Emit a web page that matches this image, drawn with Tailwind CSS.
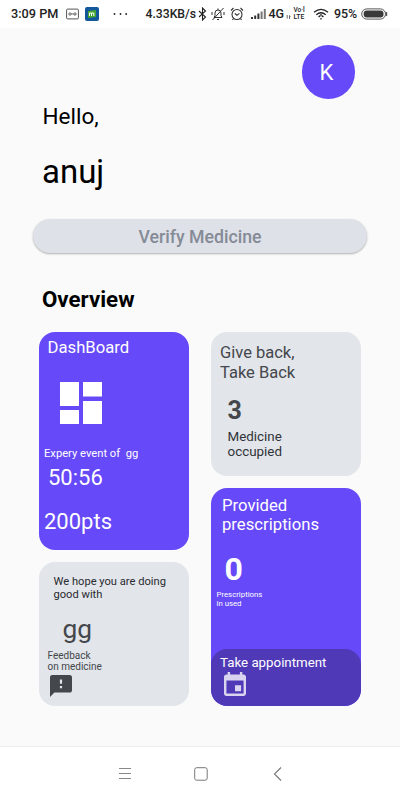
<!DOCTYPE html>
<html lang="en">
<head>
<meta charset="utf-8">
<meta name="viewport" content="width=device-width">
<title>Medicine overview</title>
<script src="https://cdn.jsdelivr.net/npm/@tailwindcss/browser@4"></script>
</head>
<body class="w-[400px] h-[800px] overflow-hidden bg-[#fafafa] flex flex-col font-[Roboto,sans-serif] text-black">
<header class="h-7 shrink-0 bg-white flex items-center pl-[11px] text-[12px] leading-[14px] font-medium text-[#222]">
  <span class="w-[55px] whitespace-nowrap text-[12.700px]">3:09 PM</span>
  <svg class="w-[13px] h-3 shrink-0" viewBox="0 0 13 12" fill="none" stroke="#555"><rect x=".6" y="1.1" width="11.8" height="9.8" rx="1"/><path d="M3 5h2v2H3zM5 6h3M8 5h2v2H8z" stroke-width=".8"/></svg>
  <svg class="w-3.5 h-3.5 ml-1.5 shrink-0" viewBox="0 0 14 14"><rect width="14" height="14" rx="2" fill="#12589b"/><path d="M3 4l8-1v7l-8 1z" fill="#45a52c"/><path d="M4.500 9V6h2v3M6.500 6h2.300v3" fill="none" stroke="#fff"/></svg>
  <svg class="w-[15px] h-3 ml-[14px] shrink-0" viewBox="0 0 15 12" fill="#222"><circle cx="1.500" cy="6" r=".9"/><circle cx="7.500" cy="6" r=".9"/><circle cx="13.200" cy="6" r=".9"/></svg>
  <span class="ml-[17.500px] w-[52.500px] whitespace-nowrap text-[12.200px]">4.33KB/s</span>
  <svg class="w-[9px] h-3.5 shrink-0" viewBox="0 0 9 14" fill="none" stroke="#222" stroke-width="1.1"><path d="M1 4l6.500 6L4.500 13V1l3 3L1 10"/></svg>
  <svg class="w-[14px] h-3.5 ml-1 shrink-0" viewBox="0 0 14 14" fill="none" stroke="#333" stroke-width="1"><path d="M3 10.500h8L10 8.500V6a3 3 0 0 0-6 0v2.500zM6 12.500h2M12.500 1L1.500 13M1 5v3M13 5v3M7 3V1.500"/></svg>
  <svg class="w-[14px] h-3.5 ml-[5px] shrink-0" viewBox="0 0 14 14" fill="none" stroke="#333" stroke-width="1.1"><circle cx="7" cy="7.500" r="5"/><path d="M4.800 6.500L7 8.300l2.400-2M1 3.500L3.500 1M13 3.500L10.500 1M3.500 11.500L2.500 13M10.500 11.500l1 1.500"/></svg>
  <svg class="w-[15px] h-3 ml-[6.500px] shrink-0" viewBox="0 0 15 12"><path d="M0 9h2v2H0zM3.200 7.500h2V11h-2zM6.400 5.500h2V11h-2z" fill="#333"/><path d="M9.600 3.500h2V11h-2zM12.800 1h2v10h-2z" fill="#777"/></svg>
  <span class="ml-[3px] w-[17px] whitespace-nowrap text-[12.500px]">4G</span>
  <svg class="w-[5px] h-3 shrink-0" viewBox="0 0 5 12" fill="none" stroke="#555" stroke-width=".9"><path d="M1.200 7v3.500M3.500 11V7.500l1 1"/></svg>
  <span class="ml-[3px] w-[13px] flex flex-col text-[7px] leading-[7px] font-medium"><span class="whitespace-nowrap text-[6.500px]">Vo·l</span><span class="whitespace-nowrap text-[6.800px]">LTE</span></span>
  <svg class="w-4 h-3 ml-[6px] shrink-0" viewBox="0 0 16 12" fill="none" stroke="#222" stroke-width="1.300"><path d="M1 4.200Q8-1.600 15 4.200M3.300 6.700Q8 2.800 12.700 6.700M5.600 9Q6.500 8 7 8M10.400 9Q9.500 8 9 8M8 6v2.500M8 10v1.500"/></svg>
  <span class="ml-[5.500px] w-[26.500px] whitespace-nowrap text-[12.400px]">95%</span>
  <svg class="w-[27px] h-3 shrink-0" viewBox="0 0 27 12"><rect x=".7" y=".9" width="23.800" height="10.200" rx="5.100" fill="none" stroke="#555"/><rect x="2.700" y="2.500" width="19.800" height="7" rx="3" fill="#3a3a3a"/><path d="M25.500 4v4" stroke="#555" stroke-width="1.300"/></svg>
</header>
<main class="flex-1 min-h-0 flex flex-col">
  <div class="self-end mr-[45px] mt-[17px] w-[53px] h-[53.500px] rounded-full bg-[#6649f8] text-white text-[22px] leading-[56px] text-center"><span class="relative -left-0.5">K</span></div>
  <p class="ml-[42.500px] mt-[4.500px] text-[22.500px] leading-[26px]">Hello,</p>
  <h1 class="ml-[42px] mt-[23.500px] text-[33px] leading-[38px]">anuj</h1>
  <button class="ml-[33px] mt-[28px] w-[334px] h-[34.500px] rounded-full bg-[#dee1e8] shadow-[0_1px_2px_rgba(0,0,0,0.300)] pt-px text-[17.700px] leading-[34px] font-medium text-[#858b96]">Verify Medicine</button>
  <h2 class="ml-[42px] mt-[33px] text-[22.300px] leading-[26px] font-bold">Overview</h2>
  <div class="ml-[39px] mt-[20px] flex gap-[22px]">
    <div class="w-[150px] flex flex-col gap-3">
      <section class="h-[218px] rounded-[16px] bg-[#6649f8] text-white flex flex-col items-start">
        <h3 class="ml-[8.500px] mt-[5.500px] text-[16.700px] leading-5">DashBoard</h3>
        <svg class="ml-[21px] mt-[24.500px] w-[42px] h-[42px] shrink-0" viewBox="0 0 42 42" fill="#fff"><path d="M0 0h19v24H0zM0 28h19v14H0zM23 0h19v14.500H23zM23 19h19v23H23z"/></svg>
        <p class="ml-[5px] mt-[23px] text-[11.200px] leading-[14px] whitespace-pre">Expery event of  gg</p>
        <p class="ml-[9px] mt-[3.500px] text-[22px] leading-[26px]">50:56</p>
        <p class="ml-[5px] mt-[18.500px] text-[22px] leading-[26px]">200pts</p>
      </section>
      <section class="h-36 rounded-[16px] bg-[#e2e5ea] text-[#44474b] flex flex-col items-start">
        <p class="ml-[14.500px] mt-[12.500px] text-[11.150px] leading-[13px] text-[#282b2f]">We hope you are doing<br>good with</p>
        <p class="ml-[23.500px] mt-[13px] text-[26.300px] leading-[30px]">gg</p>
        <p class="ml-[8.500px] mt-[6px] text-[10px] leading-[11.500px]">Feedback<br>on medicine</p>
        <svg class="ml-[11px] mt-[2.500px] w-[22px] h-[22px] shrink-0" viewBox="2 2 20 20" fill="#44474b"><path d="M20 2H4c-1.100 0-1.990.9-1.990 2L2 22l4-4h14c1.100 0 2-.9 2-2V4c0-1.100-.9-2-2-2zm-7 12h-2v-2h2v2zm0-4h-2V6h2v4z"/></svg>
      </section>
    </div>
    <div class="w-[150px] flex flex-col gap-[11.500px]">
      <section class="h-36 rounded-[16px] bg-[#e2e5ea] text-[#44474b] flex flex-col items-start">
        <h3 class="ml-[9px] mt-[11px] text-[16.500px] leading-[19.500px]">Give back,<br>Take Back</h3>
        <p class="ml-[16.500px] mt-[13.500px] text-[25px] leading-[30px] font-bold">3</p>
        <p class="ml-[16.500px] mt-[3px] text-[13.400px] leading-[15.500px] text-[#303338]">Medicine<br>occupied</p>
      </section>
      <section class="h-[218.500px] rounded-[16px] overflow-hidden bg-[#6649f8] text-white flex flex-col items-start">
        <h3 class="ml-[11px] mt-[8px] text-[16.700px] leading-[19.500px]">Provided<br>prescriptions</h3>
        <p class="ml-[13.500px] mt-[16px] text-[32px] leading-9 font-bold">0</p>
        <p class="ml-[5.500px] mt-[3px] text-[7.800px] leading-[9px]">Prescriptions<br>in used</p>
        <div class="mt-auto w-full h-[57px] rounded-[16px] bg-[#4f39b7] flex flex-col items-start">
          <p class="ml-[9px] mt-[5.500px] text-[13.300px] leading-4">Take appointment</p>
          <svg class="ml-[13px] mt-[1px] w-[22px] h-6 shrink-0" viewBox="3 1 18 20" preserveAspectRatio="none" fill="#d9d4f0"><path d="M17 12h-5v5h5v-5zM16 1v2H8V1H6v2H5c-1.110 0-1.990.9-1.990 2L3 19c0 1.100.89 2 2 2h14c1.100 0 2-.9 2-2V5c0-1.100-.9-2-2-2h-1V1h-2zm3 18H5V8h14v11z"/></svg>
        </div>
      </section>
    </div>
  </div>
</main>
<nav class="h-[54px] shrink-0 bg-white border-t border-[#eee] flex items-center">
  <svg class="ml-[118px] w-[14px] h-[14px]" viewBox="0 0 14 14" fill="none" stroke="#888"><path d="M1 1.500h12M1 6.500h12M1 11.500h12"/></svg>
  <svg class="ml-[61.500px] w-[14px] h-[14px]" viewBox="0 0 14 14" fill="none" stroke="#777"><rect x=".7" y=".7" width="12.500" height="12.500" rx="2"/></svg>
  <svg class="ml-[65px] w-[9px] h-[14px]" viewBox="0 0 9 14" fill="none" stroke="#777" stroke-width="1.100"><path d="M8 .5L1.500 7 8 13.500"/></svg>
</nav>
</body>
</html>
